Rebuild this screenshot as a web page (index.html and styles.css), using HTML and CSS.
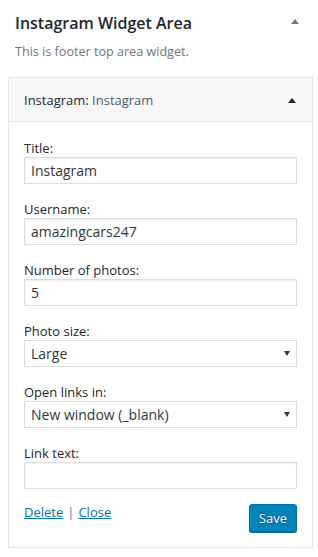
FILE: index.html
```html
<!DOCTYPE html>
<html lang="en">
<head>
<meta charset="utf-8">
<title>Instagram Widget Area</title>
<link rel="stylesheet" href="styles.css">
</head>
<body>
<div class="sidebar">
  <div class="sidebar-head">
    <h2 class="sidebar-title">Instagram Widget Area</h2>
    <svg class="toggle toggle-light" width="8" height="5" viewBox="0 0 8 5"><path d="M4 0L8 5H0Z"/></svg>
  </div>
  <p class="sidebar-desc">This is footer top area widget.</p>

  <div class="widget">
    <div class="widget-top">
      <h3 class="widget-title">Instagram: <span class="in-title">Instagram</span></h3>
      <svg class="toggle toggle-dark" width="8" height="5" viewBox="0 0 8 5"><path d="M4 0L8 5H0Z"/></svg>
    </div>
    <form class="widget-body">
      <div class="field">
        <label class="label" for="f-title">Title:</label>
        <input class="input" id="f-title" type="text" value="Instagram">
      </div>
      <div class="field">
        <label class="label" for="f-user">Username:</label>
        <input class="input" id="f-user" type="text" value="amazingcars247">
      </div>
      <div class="field">
        <label class="label" for="f-num">Number of photos:</label>
        <input class="input" id="f-num" type="text" value="5">
      </div>
      <div class="field">
        <label class="label" for="f-size">Photo size:</label>
        <div class="select-wrap">
          <select class="input select" id="f-size"><option>Large</option></select>
          <svg class="select-arrow" width="6" height="5" viewBox="0 0 6 5"><path d="M0 0H6L3 5Z"/></svg>
        </div>
      </div>
      <div class="field">
        <label class="label" for="f-target">Open links in:</label>
        <div class="select-wrap">
          <select class="input select" id="f-target"><option>New window (_blank)</option></select>
          <svg class="select-arrow" width="6" height="5" viewBox="0 0 6 5"><path d="M0 0H6L3 5Z"/></svg>
        </div>
      </div>
      <div class="field">
        <label class="label" for="f-link">Link text:</label>
        <input class="input" id="f-link" type="text" value="">
      </div>
      <div class="actions">
        <div class="links"><a href="#" class="link">Delete</a><span class="sep">|</span><a href="#" class="link">Close</a></div>
        <button type="button" class="btn-save">Save</button>
      </div>
    </form>
  </div>
</div>
</body>
</html>
```

FILE: styles.css
```css
* { box-sizing: border-box; }
html, body { margin: 0; padding: 0; background: #fff; }
body {
  font-family: "Open Sans", "Noto Sans", "Liberation Sans", sans-serif;
  font-size: 13px;
  color: #444;
}
.sidebar { width: 318px; padding: 0 5px 10px 8px; }
.sidebar-head {
  display: flex;
  align-items: center;
  justify-content: space-between;
  padding: 12px 14px 0 7px;
}
.sidebar-title {
  margin: 0;
  font-size: 16px;
  line-height: 22px;
  font-weight: 600;
  color: #23282d;
}
.toggle { display: block; }
.toggle-light { fill: #72777c; margin-top: -4px; }
.toggle-dark { fill: #23282d; }
.sidebar-desc {
  margin: 9px 0 16px 7px;
  font-size: 12.6px;
  line-height: 18px;
  color: #72777c;
}
.widget {
  border: 1px solid #e5e5e5;
  background: #fff;
}
.widget-top {
  height: 44px;
  display: flex;
  align-items: center;
  justify-content: space-between;
  padding: 1px 16px 0 15px;
  background: #f7f7f7;
  border-bottom: 1px solid #e5e5e5;
}
.widget-title {
  margin: 0;
  font-size: 13px;
  line-height: 18px;
  font-weight: 400;
  color: #23282d;
}
.in-title { color: #555d66; }
.widget-body {
  margin: 0;
  padding: 18px 15px 15px;
}
.field { display: flex; flex-direction: column; margin-bottom: 17px; }
.label {
  font-size: 13px;
  line-height: 17px;
  color: #23282d;
}
.input {
  display: block;
  width: 100%;
  height: 27px;
  margin: 0;
  padding: 0 6px;
  border: 1px solid #ddd;
  border-radius: 0;
  box-shadow: inset 0 1px 2px rgba(0,0,0,.07);
  background: #fff;
  font-family: inherit;
  font-size: 14px;
  color: #32373c;
  outline: none;
}
.select-wrap { position: relative; }
.select {
  -webkit-appearance: none;
  appearance: none;
  padding: 0 24px 0 6px;
  box-shadow: none;
}
.select-arrow {
  position: absolute;
  right: 7px;
  top: 11px;
  fill: #32373c;
  pointer-events: none;
}
.actions {
  display: flex;
  justify-content: space-between;
  align-items: center;
  margin-top: -2px;
}
.links { font-size: 13px; line-height: 18px; color: #a0a5aa; margin-top: -12px; }
.link { color: #0073aa; text-decoration: underline; }
.sep { margin: 0 4px; color: #72777c; }
.btn-save {
  height: 28px;
  padding: 0 9px;
  border: 1px solid #0073aa;
  border-radius: 3px;
  background: #0085ba;
  box-shadow: 0 1px 0 #006799;
  color: #fff;
  font-family: inherit;
  font-size: 13px;
  line-height: 26px;
  text-shadow: 0 -1px 1px #006799, 1px 0 1px #006799, 0 1px 1px #006799, -1px 0 1px #006799;
}
```
